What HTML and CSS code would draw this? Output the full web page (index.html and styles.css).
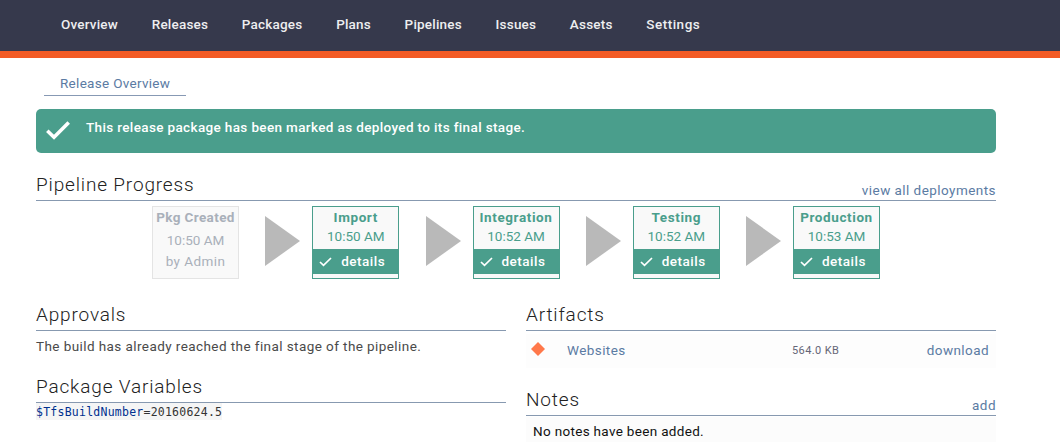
FILE: index.html
```html
<!DOCTYPE html>
<html lang="en">
<head>
<meta charset="utf-8">
<title>Release Overview</title>
<link rel="stylesheet" href="styles.css">
</head>
<body>
<header class="topbar">
  <nav class="nav">
    <a class="nav-item">Overview</a>
    <a class="nav-item">Releases</a>
    <a class="nav-item">Packages</a>
    <a class="nav-item">Plans</a>
    <a class="nav-item">Pipelines</a>
    <a class="nav-item">Issues</a>
    <a class="nav-item">Assets</a>
    <a class="nav-item">Settings</a>
  </nav>
</header>
<main class="page">
  <div class="tabs"><a class="tab">Release Overview</a></div>
  <div class="alert">
    <svg class="alert-icon" width="24" height="19" viewBox="0 0 24 19"><path d="M1.3 9.8 8 16.2 22.7 1.5" fill="none" stroke="#fff" stroke-width="3.6"/></svg>
    <span class="alert-text">This release package has been marked as deployed to its final stage.</span>
  </div>
  <section class="progress">
    <div class="heading"><h2 class="title">Pipeline Progress</h2><a class="action view-all">view all deployments</a></div>
    <div class="pipeline">
      <div class="stage created"><b class="stage-name">Pkg Created</b><span class="stage-time">10:50 AM</span><span class="stage-by">by Admin</span></div>
      <svg class="arrow" width="35" height="50"><path d="M0 0 35 25 0 50z" fill="#b9b9b9"/></svg>
      <div class="stage done"><b class="stage-name">Import</b><span class="stage-time">10:50 AM</span><a class="details"><svg class="check" width="13" height="10" viewBox="0 0 13 10"><path d="M1 5 4.5 8.4 12 1" fill="none" stroke="#fff" stroke-width="1.7"/></svg><span>details</span></a></div>
      <svg class="arrow" width="35" height="50"><path d="M0 0 35 25 0 50z" fill="#b9b9b9"/></svg>
      <div class="stage done"><b class="stage-name">Integration</b><span class="stage-time">10:52 AM</span><a class="details"><svg class="check" width="13" height="10" viewBox="0 0 13 10"><path d="M1 5 4.5 8.4 12 1" fill="none" stroke="#fff" stroke-width="1.7"/></svg><span>details</span></a></div>
      <svg class="arrow" width="35" height="50"><path d="M0 0 35 25 0 50z" fill="#b9b9b9"/></svg>
      <div class="stage done"><b class="stage-name">Testing</b><span class="stage-time">10:52 AM</span><a class="details"><svg class="check" width="13" height="10" viewBox="0 0 13 10"><path d="M1 5 4.5 8.4 12 1" fill="none" stroke="#fff" stroke-width="1.7"/></svg><span>details</span></a></div>
      <svg class="arrow" width="35" height="50"><path d="M0 0 35 25 0 50z" fill="#b9b9b9"/></svg>
      <div class="stage done"><b class="stage-name">Production</b><span class="stage-time">10:53 AM</span><a class="details"><svg class="check" width="13" height="10" viewBox="0 0 13 10"><path d="M1 5 4.5 8.4 12 1" fill="none" stroke="#fff" stroke-width="1.7"/></svg><span>details</span></a></div>
    </div>
  </section>
  <div class="columns">
    <div class="column">
      <div class="heading"><h2 class="title">Approvals</h2></div>
      <p class="approval-text">The build has already reached the final stage of the pipeline.</p>
      <div class="heading variables"><h2 class="title">Package Variables</h2></div>
      <code class="code"><span class="var">$TfsBuildNumber</span>=20160624.5</code>
    </div>
    <div class="column">
      <div class="heading"><h2 class="title">Artifacts</h2></div>
      <div class="artifact">
        <svg class="diamond" width="14" height="14"><path d="M7 0 14 7 7 14 0 7z" fill="#ff784a"/></svg>
        <a class="artifact-name">Websites</a>
        <span class="size">564.0 KB</span>
        <a class="download">download</a>
      </div>
      <div class="heading notes-heading"><h2 class="title">Notes</h2><a class="action">add</a></div>
      <p class="notes">No notes have been added.</p>
    </div>
  </div>
</main>
</body>
</html>
```
FILE: styles.css
```css
* { box-sizing: border-box; }
body { margin: 0; height: 442px; overflow: hidden; background: #fff; color: #4a4a4a; font: 13.5px/20px Roboto, "Liberation Sans", sans-serif; letter-spacing: .42px; }
h2, p { margin: 0; }
a { color: #5b7ba3; white-space: nowrap; }
.topbar { height: 58px; background: #36394c; border-bottom: 7px solid #f35b25; }
.nav { display: flex; gap: 33.7px; padding: 14px 0 0 61px; }
.nav-item { color: #eeeef0; font-weight: 500; letter-spacing: .2px; }
.nav-item:last-child { letter-spacing: .5px; }
.page { width: 960px; margin-left: 36px; }
.tabs { display: flex; height: 38px; padding: 15px 0 0 8px; }
.tab { width: 142px; padding: 0 0 0 16px; border-bottom: 1px solid #8799b4; letter-spacing: .3px; }
.alert { display: flex; height: 44px; margin-top: 13px; padding: 8px 0 0 10px; background: #4a9e8c; border-radius: 5px; color: #fff; }
.alert-icon { margin: 4px 16px 0 0; }
.alert-text { font-weight: 500; letter-spacing: .36px; }
.progress { margin-top: 17px; }
.heading { display: flex; justify-content: space-between; height: 31px; border-bottom: 1px solid #8799b0; }
.title { font-size: 19px; line-height: 29px; font-weight: 300; letter-spacing: .84px; color: #222; }
.action { padding-top: 10px; letter-spacing: .45px; }
.pipeline { display: flex; padding: 5px 0 0 116px; }
.stage { display: flex; flex-direction: column; width: 87px; height: 73px; text-align: center; border: 1px solid #4a9e8c; background: #f9f9f9; color: #4a9e8c; white-space: nowrap; }
.created { border-color: #e4e4e4; color: #a9b0ba; }
.stage-name { line-height: 20px; letter-spacing: .6px; }
.stage-time { line-height: 19px; letter-spacing: 0; }
.created .stage-name { letter-spacing: .38px; }
.created .stage-time { padding-top: 3px; line-height: 21px; }
.created .stage-by { line-height: 20px; }
.details { display: flex; height: 25px; margin-top: 3px; padding: 2px 0 0 6px; background: #4a9e8c; color: #fff; font-weight: 500; letter-spacing: .5px; }
.check { margin: 6px 9px 0 0; }
.arrow { margin: 10px 12px 0 26.25px; }
.columns { display: grid; grid-template-columns: 470px 470px; gap: 20px; margin-top: 21px; }
.approval-text { height: 41px; padding-top: 5px; }
.code { display: block; width: 186px; height: 17px; background: #f5f5f5; color: #333; font: 11.5px/18px "DejaVu Sans Mono", monospace; letter-spacing: .24px; }
.var { color: #00308f; }
.artifact { display: grid; grid-template-columns: 36px 225px 1fr auto; height: 34px; margin-top: 3px; padding: 6px 7px 0 5px; background: #fdfdfd; }
.diamond { margin-top: 2px; }
.size { padding-top: 1px; font-size: 11px; color: #667; letter-spacing: .4px; }
.notes-heading { margin-top: 17px; }
.notes { height: 40px; margin-top: 1px; padding: 4px 0 0 7px; background: #fcfcfc; color: #111; letter-spacing: .32px; }
```
